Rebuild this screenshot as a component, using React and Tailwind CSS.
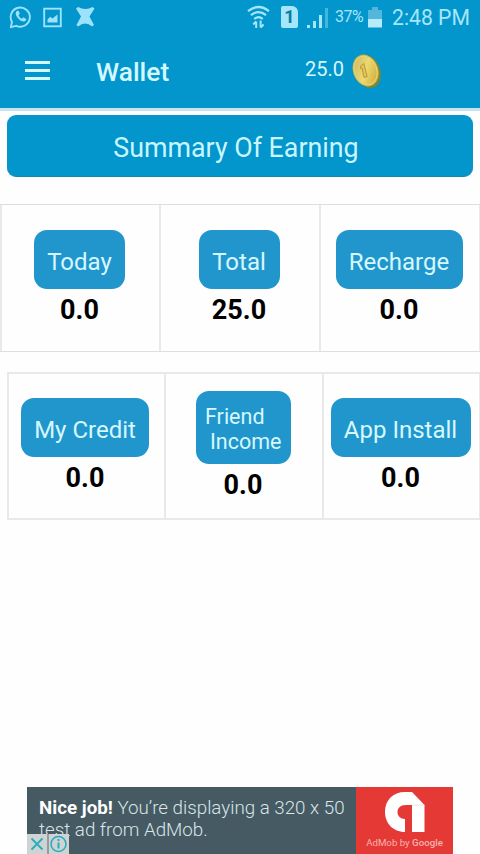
import React from "react";

function StatusIcons() {
  return (
    <div className="flex items-center">
      <svg className="ml-[9px] h-[24px] w-[24px]" viewBox="0 0 24 24" fill="none" stroke="#9be2fa">
        <path d="M1.8 22.2 L3 17 A9.6 9.6 0 1 1 7.2 20.8 Z" strokeWidth="1.9" strokeLinejoin="round" />
        <path d="M8.4 5.8 C6 7 6.2 9.8 8.8 13 C11.6 16.4 14.8 17.6 17 15.6 L17.2 14 L14.4 12.2 L13 13.8 C11.6 13.2 10.2 11.8 9.6 10.2 L10.8 8.8 L9.6 5.8 Z" fill="#9be2fa" stroke="none" />
      </svg>
      <svg className="ml-[10px] h-[21px] w-[19px]" viewBox="0 0 19 21" fill="none">
        <rect x="1.2" y="1.7" width="16.6" height="17.6" stroke="#9be2fa" strokeWidth="1.9" />
        <path d="M4.5 15.5 V12.5 L7.2 9.8 L9.4 11.6 L14.5 7.6 V15.5 Z" fill="#9be2fa" />
      </svg>
      <svg className="ml-[14px] h-[20px] w-[19px]" viewBox="0 0 19 20" fill="#9be2fa">
        <path d="M0 1.5 L2 0 Q9.5 4 16.5 0 L18.5 1.5 L13.5 9.5 L18 18 L16 19.5 Q9.5 13.5 2 19.5 L0.5 18 L5 9.5 Z" />
      </svg>
    </div>
  );
}

function StatusBar() {
  return (
    <div className="flex h-[34px] items-center justify-between text-[#a5e6fb]">
      <StatusIcons />
      <div className="flex h-full items-center pr-[12px]">
        <svg className="h-[24px] w-[23px]" viewBox="0 0 23 24" fill="none" stroke="#a5e6fb" strokeWidth="2.2">
          <path d="M1 6.2 Q11.5 -2.2 22 6.2" />
          <path d="M4 10.2 Q11.5 4 19 10.2" />
          <path d="M7.2 14 Q11.5 10.4 15.8 14" />
          <path d="M9.2 23 V16.5 M6.2 19.5 L9.2 16.5 M13.6 15.5 V22.5 M16.6 19.5 L13.6 22.5" strokeWidth="2" />
        </svg>
        <div className="ml-[11px] flex h-[22px] w-[17px] items-center justify-center rounded-[2px] rounded-tr-[6px] bg-[#a5e6fb] text-[18px] leading-none font-bold text-[#0b7ba5]">1</div>
        <svg className="ml-[9px] h-[21px] w-[22px]" viewBox="0 0 22 21" fill="#a5e6fb">
          <rect x="0" y="18" width="3" height="3" />
          <rect x="6" y="14" width="3" height="7" />
          <rect x="12" y="8" width="3" height="13" />
          <rect x="18" y="1" width="3" height="20" opacity="0.4" />
        </svg>
        <span className="ml-[6px] w-[28px] text-[16px] tracking-[-0.5px] whitespace-nowrap">37%</span>
        <svg className="ml-[5px] h-[21px] w-[14px]" viewBox="0 0 14 21">
          <path d="M4 0 H10 V3 H14 V12 H0 V3 H4 Z" fill="#53b7dc" />
          <rect y="12" width="14" height="8.5" fill="#b5ecfc" />
        </svg>
        <span className="ml-[10px] w-[76px] pt-[1px] text-[21.2px] whitespace-nowrap">2:48 PM</span>
      </div>
    </div>
  );
}

function Coin() {
  return (
    <svg className="mt-[-1px] ml-[7px] h-[36px] w-[32px]" viewBox="0 0 32 36">
      <defs>
        <linearGradient id="coin" x1="0" y1="0" x2="1" y2="1">
          <stop offset="0" stopColor="#c9b45c" />
          <stop offset="0.5" stopColor="#ecd972" />
          <stop offset="1" stopColor="#c9a32a" />
        </linearGradient>
      </defs>
      <ellipse cx="16.8" cy="18.5" rx="12.5" ry="16.8" transform="rotate(-20 16.8 18.5)" fill="#7c852f" />
      <ellipse cx="14.6" cy="17.5" rx="12.5" ry="16.3" transform="rotate(-20 14.6 17.5)" fill="#cdb84c" />
      <ellipse cx="14.6" cy="17.5" rx="11.2" ry="14.8" transform="rotate(-20 14.6 17.5)" fill="url(#coin)" stroke="#e6d683" strokeWidth="0.9" />
      <path d="M9.4 13.2 L12.8 10.5 L16.2 23.5 L13 24.5 L11 15 L9.8 15.6 Z" fill="#e3c455" stroke="#b0933a" strokeWidth="0.9" />
    </svg>
  );
}

function Cell({ className, button, label, value }) {
  return (
    <div className={`flex flex-col items-center border-[#e9e9e9] ${className}`}>
      <div className={`flex shrink-0 items-center justify-center rounded-[13px] bg-[#2196cd] whitespace-nowrap text-[#d5f8ff] ${button}`}>{label}</div>
      <div className="mt-[5px] text-[27px] leading-[32px] font-bold text-black">{value}</div>
    </div>
  );
}

const single = "h-[59px] text-[24px] leading-[28px] pt-[4px]";

export default function App() {
  return (
    <div className="flex h-[854px] w-[480px] flex-col overflow-hidden bg-[#fefefe] font-['Roboto','Liberation_Sans',sans-serif]">
      <header className="h-[111px] shrink-0 border-b-[3px] border-[#c5e4f0] bg-[#0296cc]">
        <StatusBar />
        <div className="flex h-[74px] items-center text-[#d5f8ff]">
          <div className="mt-[-2px] ml-[25px] flex w-[25px] flex-col gap-[5px]">
            <i className="h-[3px] bg-[#d5f8ff]" />
            <i className="h-[3px] bg-[#d5f8ff]" />
            <i className="h-[3px] bg-[#d5f8ff]" />
          </div>
          <h1 className="mt-[2px] ml-[46px] w-[209px] text-[26.3px] leading-[32px] font-medium">Wallet</h1>
          <span className="mt-[-5px] w-[39px] text-[20px] leading-[24px] whitespace-nowrap">25.0</span>
          <Coin />
        </div>
      </header>

      <div className="mt-[4px] ml-[7px] flex h-[62px] w-[466px] shrink-0 items-center justify-center rounded-[9px] border-b border-[#1687ac] bg-[#0296cc] pt-[6px] pr-[8px] text-[26.8px] whitespace-nowrap text-[#c9f5ff]">
        Summary Of Earning
      </div>

      <section className="mt-[27px] flex h-[148px] w-[480px] shrink-0 border-y border-[#dedede]">
        <Cell className="w-[159px] border-l-2 pt-[25px] pr-[2px]" button={`w-[91px] ${single}`} label="Today" value="0.0" />
        <Cell className="w-[160px] border-l-2 pt-[25px] pr-[2px]" button={`w-[81px] ${single}`} label="Total" value="25.0" />
        <Cell className="w-[161px] border-l-2 border-r pt-[25px] pr-[2px]" button={`w-[127px] ${single}`} label="Recharge" value="0.0" />
      </section>

      <section className="mt-[20px] ml-[7px] flex h-[148px] w-[473px] shrink-0 border-y-2 border-[#e9e9e9]">
        <Cell className="w-[157px] border-l-2 pt-[24px] pr-[3px]" button={`w-[128px] ${single}`} label="My Credit" value="0.0" />
        <Cell
          className="w-[158px] border-l-2 pt-[17px] pr-[2px]"
          button="h-[73px] w-[95px] text-[21.5px] leading-[25px] pt-[3px]"
          label={<div className="w-[76px]">Friend<div className="pl-[5px]">Income</div></div>}
          value="0.0"
        />
        <Cell className="w-[158px] border-l-2 border-r pt-[24px] pr-[2px]" button={`w-[140px] ${single}`} label="App Install" value="0.0" />
      </section>

      <footer className="relative mt-auto ml-[27px] flex h-[67px] w-[426px] shrink-0 bg-[#455a62]">
        <p className="w-[329px] pt-[10px] pl-[12px] text-[18.75px] leading-[22px] font-light whitespace-nowrap text-[#d9e5e9]">
          <b className="font-bold text-white">Nice job!</b> You’re displaying a 320 x 50<br />test ad from AdMob.
        </p>
        <div className="flex w-[97px] flex-col items-center bg-[#e53935] pt-[5px]">
          <svg className="h-[40px] w-[40px]" viewBox="0 0 40 40">
            <path d="M20 40 C8 40 0 31 0 20 C0 8 8 0 20 0 H27 L39.5 13 V40 H27 V13 H21 C15 13 12.5 16.5 12.5 20 C12.5 24 15.5 27 20 27 Z" fill="#fff" />
            <path d="M27 13 H39.5" stroke="#ddd" strokeWidth="0.7" />
          </svg>
          <span className="mt-[4px] text-[9.7px] leading-[14px] whitespace-nowrap text-[#f6b4b1]">AdMob by <b className="font-medium">Google</b></span>
        </div>
        <div className="absolute bottom-0 left-0 flex h-[20px] w-[42px] items-center bg-[#d0d3d3]">
          <svg className="h-[20px] w-[42px]" viewBox="0 0 42 20" fill="none" stroke="#27aebd">
            <path d="M4.5 4.5 L15.5 15.5 M15.5 4.5 L4.5 15.5" strokeWidth="1.8" />
            <path d="M21 0 V20" stroke="#59696e" />
            <circle cx="31.5" cy="10" r="7.5" strokeWidth="1.6" />
            <path d="M31.5 8.5 V14.5 M31.5 5 V7" strokeWidth="2" />
          </svg>
        </div>
      </footer>
    </div>
  );
}
